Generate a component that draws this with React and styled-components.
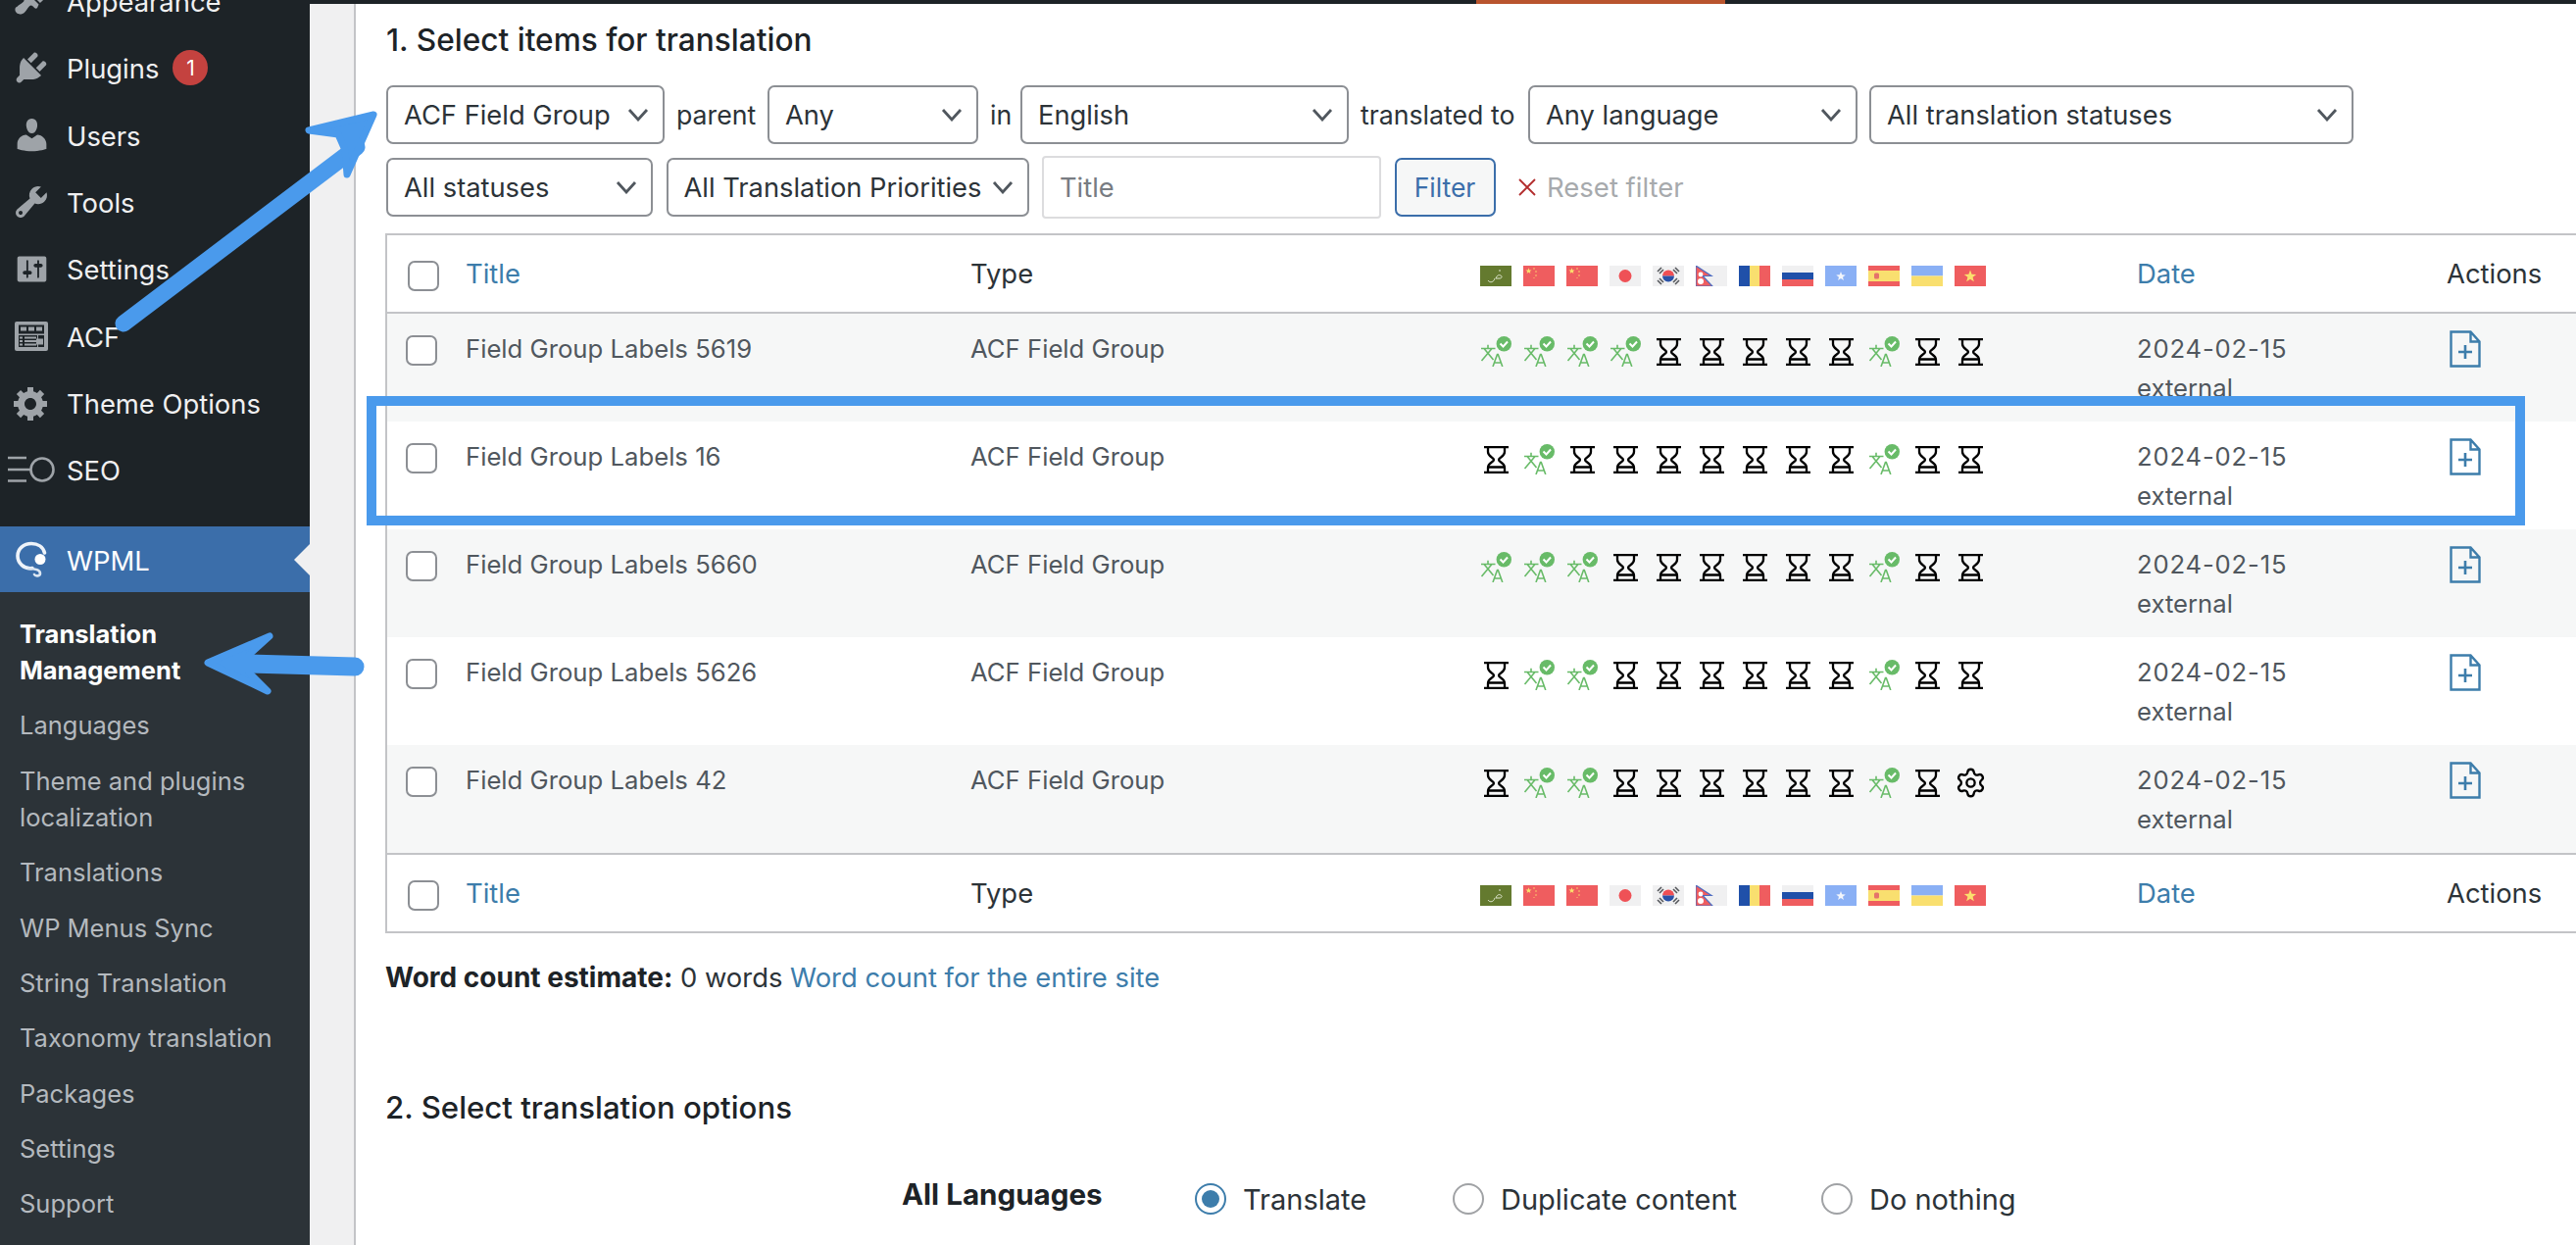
import React from "react";
import styled, { createGlobalStyle } from "styled-components";
import { Settings as GearIcon } from "lucide-react";

const GlobalStyle = createGlobalStyle`
  html, body {
    margin: 0;
    padding: 0;
    background: #fff;
  }
  body {
    font-family: Inter, "Noto Sans", "Liberation Sans", sans-serif;
    font-size: 26px;
    color: #2c3338;
    overflow: hidden;
  }
  * {
    box-sizing: border-box;
  }
`;

const Shell = styled.div`
  position: relative;
  display: flex;
  width: 2628px;
  height: 1270px;
  overflow: hidden;
`;

const Sidebar = styled.nav`
  flex: 0 0 316px;
  display: flex;
  flex-direction: column;
  background: #1d2327;
`;

const TopMenu = styled.div`
  margin-top: -33px;
  margin-bottom: 24px;
`;

const MenuItem = styled.div`
  display: flex;
  align-items: center;
  height: ${(p) => (p.$active ? "67px" : "68.3px")};
  padding-top: 2px;
  font-size: 27.4px;
  color: ${(p) => (p.$active ? "#fff" : "#f0f0f1")};
  background: ${(p) => (p.$active ? "#3b6eaa" : "transparent")};
  position: relative;
`;

const MenuIcon = styled.span`
  flex: 0 0 68px;
  display: flex;
  justify-content: center;
  padding-right: 4px;
  margin-top: -2px;
  svg {
    display: block;
  }
`;

const Badge = styled.span`
  width: 36px;
  height: 36px;
  margin-left: 14px;
  margin-top: -2px;
  border-radius: 50%;
  background: #c4423f;
  color: #fff;
  font-size: 21px;
  display: flex;
  align-items: center;
  justify-content: center;
`;

const ActiveNotch = styled.span`
  position: absolute;
  right: 0;
  top: 50%;
  margin-top: -16px;
  border-style: solid;
  border-width: 16px 16px 16px 0;
  border-color: transparent #f0f0f1 transparent transparent;
`;

const SubMenu = styled.div`
  flex: 1;
  background: #2c3338;
  padding: 14px 0 0 20px;
`;

const SubItem = styled.div`
  padding: 9.7px 0;
  font-size: 25.5px;
  line-height: 37px;
  color: ${(p) => (p.$current ? "#fff" : "#b4b9be")};
  font-weight: ${(p) => (p.$current ? 700 : 400)};
`;

const Gutter = styled.main`
  flex: 1;
  display: flex;
  flex-direction: column;
  min-width: 0;
  background: #f0f0f1;
`;

const TopStrip = styled.div`
  flex: 0 0 4px;
  background: #1d2327;
  padding-left: 1190px;
`;

const StripTab = styled.div`
  width: 254px;
  height: 4px;
  background: #b9552e;
`;

const Panel = styled.div`
  flex: 1;
  margin-left: 45px;
  border-left: 2px solid #c3c4c7;
  background: #fff;
  padding-left: 31px;
`;

const Heading = styled.h3`
  margin: ${(p) => (p.$shift ? "0 0 0 -1px" : "0")};
  font-size: ${(p) => (p.$shift ? "31.2px" : "31.6px")};
  font-weight: 500;
  line-height: 40px;
  color: #1d2327;
  padding-top: ${(p) => p.$top}px;
`;

const FilterRow = styled.div`
  display: flex;
  align-items: center;
  gap: ${(p) => p.$gap}px;
  height: 60px;
  margin-top: ${(p) => p.$top}px;
`;

const FilterWord = styled.span`
  flex: 0 0 ${(p) => p.$width}px;
  min-width: 0;
  font-size: 26.7px;
  color: #2c3338;
  white-space: nowrap;
`;

const Select = styled.div`
  flex: 0 0 ${(p) => p.$width}px;
  height: 60px;
  display: flex;
  align-items: center;
  justify-content: space-between;
  padding: 0 14px 0 16px;
  border: 2px solid #8c8f94;
  border-radius: 7px;
  background: #fff;
  font-size: 27.3px;
  color: #2c3338;
  white-space: nowrap;
  svg {
    flex: none;
  }
`;

const TitleInput = styled.div`
  flex: 0 0 346px;
  height: 64px;
  display: flex;
  align-items: center;
  padding-left: 16px;
  border: 2px solid #dcdcde;
  border-radius: 4px;
  font-size: 27.3px;
  color: #787c82;
`;

const FilterButton = styled.div`
  flex: 0 0 103px;
  height: 60px;
  display: flex;
  align-items: center;
  justify-content: center;
  background: #f6f7f7;
  border: 2px solid #3b6eaa;
  border-radius: 7px;
  color: #3b6eaa;
  font-size: 26.5px;
`;

const ResetLink = styled.span`
  display: flex;
  align-items: center;
  gap: 11px;
  margin-left: 10px;
  font-size: 27.5px;
  color: #a7aaad;
`;

const Table = styled.table`
  width: 2300px;
  margin: 17px 0 0 -1px;
  table-layout: fixed;
  border-collapse: separate;
  border-spacing: 0;
  border: 2px solid #c3c4c7;
  font-size: 25.7px;
  th {
    height: 80px;
    padding: 0;
    text-align: left;
    font-size: 27.4px;
    font-weight: 400;
    vertical-align: middle;
    color: #2c3338;
    background: #fff;
  }
  thead th {
    border-bottom: 2px solid #c3c4c7;
  }
  tfoot th {
    border-top: 2px solid #c3c4c7;
  }
  td {
    height: 110px;
    padding: 16px 0 0;
    vertical-align: top;
    line-height: 40px;
    color: #50575e;
  }
  tbody tr:nth-child(odd) td {
    background: #f6f7f7;
  }
`;

const SortLink = styled.a`
  color: #3d7dab;
  text-decoration: none;
`;

const Checkbox = styled.span`
  display: block;
  width: 32px;
  height: 31px;
  margin-left: ${(p) => (p.$head ? 21 : 19)}px;
  margin-top: ${(p) => (p.$head ? 4 : 6)}px;
  background: #fff;
  border: 2px solid #8c8f94;
  border-radius: 7px;
`;

const FlagRow = styled.div`
  display: flex;
  gap: 12px;
  margin-top: 5px;
  svg {
    display: block;
  }
`;

const StatusRow = styled.div`
  display: flex;
  gap: 12px;
  margin-top: 7px;
`;

const StatusSlot = styled.span`
  flex: 0 0 32px;
  height: 31px;
  display: flex;
  align-items: center;
  justify-content: center;
  color: #000;
`;

const DateLine = styled.div`
  white-space: nowrap;
  letter-spacing: ${(p) => (p.$digits ? "0.8px" : "0")};
`;

const ActionCell = styled.div`
  padding-left: 3px;
  svg {
    display: block;
    margin-top: 1px;
  }
`;

const WordCount = styled.p`
  margin: 25px 0 0 -1px;
  line-height: 40px;
  font-size: 27.4px;
  color: #2c3338;
  strong {
    font-size: 28px;
    font-weight: 700;
    color: #1d2327;
  }
  a {
    color: #3d7dab;
    text-decoration: none;
  }
`;

const OptionsRow = styled.div`
  display: flex;
  align-items: center;
  margin: 55px 0 0 526px;
`;

const OptionsLabel = styled.strong`
  flex: 0 0 299px;
  font-weight: 700;
  font-size: 29.6px;
  color: #1d2327;
  position: relative;
  top: -5px;
`;

const RadioOption = styled.label`
  flex: 0 0 ${(p) => p.$width}px;
  display: flex;
  align-items: center;
  gap: 17px;
  font-size: 29px;
  color: #2c3338;
  white-space: nowrap;
`;

const Radio = styled.span`
  width: 32px;
  height: 32px;
  border-radius: 50%;
  border: 2px solid ${(p) => (p.$on ? "#3d7dab" : "#a0a2a5")};
  display: flex;
  align-items: center;
  justify-content: center;
  &::after {
    content: "";
    display: ${(p) => (p.$on ? "block" : "none")};
    width: 18px;
    height: 18px;
    border-radius: 50%;
    background: #3d7dab;
  }
`;

const HighlightBox = styled.div`
  position: absolute;
  left: 374px;
  top: 404px;
  width: 2202px;
  height: 132px;
  border: 10px solid #4a9aec;
  pointer-events: none;
`;

const ArrowLayer = styled.svg`
  position: absolute;
  inset: 0;
  pointer-events: none;
`;

const ICONS = {
  appearance:
    "M14.48 11.06L7.41 3.99l1.5-1.5c.5-.56 2.3-.47 3.51.32 1.21.8 1.43 1.28 2.91 2.1 1.18.64 2.45 1.26 4.45.85zm-.71.71L6.7 4.7 4.93 6.47c-.39.39-.39 1.02 0 1.41l1.06 1.06c.39.39.39 1.03 0 1.42-.6.6-1.43 1.11-2.21 1.69-.35.26-.7.53-1.01.84C1.43 13.23 1.4 15 2.44 16.04c1.04 1.04 2.81 1.01 4.15-.33.31-.31.58-.66.85-1.01.58-.78 1.09-1.61 1.69-2.21.39-.39 1.02-.39 1.41 0l1.06 1.06c.39.39 1.02.39 1.41 0z",
  plugins:
    "M13.11 4.36L9.87 7.6 8 5.73l3.24-3.24c.35-.34 1.05-.2 1.56.32.52.51.66 1.21.31 1.55zm-8 1.77l.91-1.12 9.01 9.01-1.19.84c-.71.71-2.63 1.16-3.82 1.16H6.14L4.9 17.26c-.59.59-1.54.59-2.12 0-.59-.58-.59-1.53 0-2.12l1.24-1.24v-3.88c0-1.13.4-3.19 1.09-3.89zm7.26 3.97l3.24-3.24c.34-.35 1.04-.21 1.55.31.52.51.66 1.21.31 1.55l-3.24 3.25z",
  users:
    "M10 9.25c-2.27 0-2.73-3.44-2.73-3.44C7 4.02 7.82 2 9.97 2c2.16 0 2.98 2.02 2.71 3.81 0 0-.41 3.44-2.68 3.44zm0 2.57L12.72 10c2.39 0 4.52 2.33 4.52 4.53v2.49s-3.65 1.13-7.24 1.13c-3.65 0-7.24-1.13-7.24-1.13v-2.49c0-2.25 1.94-4.48 4.47-4.48z",
  tools:
    "M16.68 9.77c-1.34 1.34-3.3 1.67-4.95.99l-5.41 6.52c-.99.99-2.59.99-3.58 0s-.99-2.59 0-3.57l6.52-5.42c-.68-1.65-.35-3.61.99-4.95 1.28-1.28 3.12-1.62 4.72-1.06l-2.89 2.89 2.82 2.82 2.86-2.87c.53 1.58.18 3.39-1.08 4.65zM3.81 16.21c.4.39 1.04.39 1.43 0 .4-.4.4-1.04 0-1.43-.39-.4-1.03-.4-1.43 0-.39.39-.39 1.03 0 1.43z",
  settings:
    "M18 16V4c0-.55-.45-1-1-1H3c-.55 0-1 .45-1 1v12c0 .55.45 1 1 1h14c.55 0 1-.45 1-1zM8 11h1c.55 0 1 .45 1 1s-.45 1-1 1H8v1.5c0 .28-.22.5-.5.5s-.5-.22-.5-.5V13H6c-.55 0-1-.45-1-1s.45-1 1-1h1V5.5c0-.28.22-.5.5-.5s.5.22.5.5V11zm5-2h-1c-.55 0-1-.45-1-1s.45-1 1-1h1V5.5c0-.28.22-.5.5-.5s.5.22.5.5V7h1c.55 0 1 .45 1 1s-.45 1-1 1h-1v5.5c0 .28-.22.5-.5.5s-.5-.22-.5-.5V9z",
  gear:
    "M18 12h-2.18c-.17.7-.44 1.35-.81 1.93l1.54 1.54-2.1 2.1-1.54-1.54c-.58.36-1.23.63-1.91.79V19H8v-2.18c-.68-.16-1.33-.43-1.91-.79l-1.54 1.54-2.12-2.12 1.54-1.54c-.36-.58-.63-1.23-.79-1.91H1V9.03h2.17c.16-.7.44-1.35.8-1.94L2.43 5.55l2.1-2.1 1.54 1.54c.58-.37 1.24-.64 1.93-.81V2h3v2.18c.68.16 1.33.43 1.91.79l1.54-1.54 2.12 2.12-1.54 1.54c.36.59.64 1.24.8 1.94H18V12zm-8.5 1.5c1.66 0 3-1.34 3-3s-1.34-3-3-3-3 1.34-3 3 1.34 3 3 3z",
};

const DashIcon = ({ name, size = 40 }) => (
  <svg width={size} height={size} viewBox="0 0 20 20" fill="#9ea3a8">
    <path d={ICONS[name]} />
  </svg>
);

const AcfIcon = () => (
  <svg width="34" height="30" viewBox="0 0 34 30">
    <rect width="34" height="30" rx="2" fill="#9ea3a8" />
    <rect x="4" y="3.5" width="26" height="9" fill="#1d2327" />
    <g fill="#9ea3a8">
      <rect x="6" y="5.5" width="6" height="4" />
      <rect x="14" y="5.5" width="6" height="4" />
      <rect x="22" y="5.5" width="6" height="4" />
    </g>
    <rect x="4" y="14" width="19" height="12" fill="#1d2327" />
    <rect x="24" y="14" width="6" height="12" fill="#1d2327" />
    <g fill="#9ea3a8">
      <rect x="5" y="15.5" width="3" height="2" />
      <rect x="10" y="15.5" width="12" height="2" />
      <rect x="5" y="19" width="3" height="2" />
      <rect x="10" y="19" width="12" height="2" />
      <rect x="5" y="22.5" width="3" height="2" />
      <rect x="10" y="22.5" width="12" height="2" />
      <rect x="22" y="17.5" width="7" height="6" />
    </g>
  </svg>
);

const SeoIcon = () => (
  <svg width="50" height="28" viewBox="0 0 50 28">
    <g stroke="#9ea3a8" strokeWidth="2.6" fill="none">
      <path d="M1 2h19M1 14h23M1 25.5h19" />
      <circle cx="36" cy="14" r="11.5" />
    </g>
  </svg>
);

const WpmlIcon = () => (
  <svg width="32" height="38" viewBox="0 0 32 38" fill="none">
    <path
      d="M17 27.500C8 29 2 22 2 15 2 8 8 2.500 16 2.500c6.500 0 12 3.500 13.500 9.500"
      stroke="#eef3f9"
      strokeWidth="3.6"
      strokeLinecap="round"
    />
    <circle cx="25" cy="18.500" r="5.500" fill="#fff" />
    <path
      d="M13 28c5 0 12 1 12 5 0 3-5 3-6 1"
      stroke="#dbe6f2"
      strokeWidth="2.6"
      strokeLinecap="round"
    />
  </svg>
);

const Chevron = () => (
  <svg width="22" height="14" viewBox="0 0 22 14" fill="none">
    <path d="M2 2l9 10 9-10" stroke="#50575e" strokeWidth="2.8" />
  </svg>
);

const CrossIcon = () => (
  <svg width="18" height="18" viewBox="0 0 18 18">
    <path d="M1 1l16 16M17 1L1 17" stroke="#b32d2e" strokeWidth="1.8" />
  </svg>
);

const Star = ({ cx, cy, r, fill }) => {
  const pts = [];
  for (let i = 0; i < 10; i++) {
    const rad = i % 2 ? r * 0.42 : r;
    const a = -Math.PI / 2 + (i * Math.PI) / 5;
    pts.push(`${cx + rad * Math.cos(a)},${cy + rad * Math.sin(a)}`);
  }
  return <polygon points={pts.join(" ")} fill={fill} />;
};

const FLAG_RED = "#ef5d5f";
const FLAG_PALE = "#f0f0f1";

const FLAGS = [
  <>
    <rect width="32" height="21" fill="#647a2f" />
    <path
      d="M8 15c2 3 6 2 7-2M16 13c1-3 3-4 5-3 2 1 1 3-1 3h-4M19 5h2"
      stroke="#dfe6cf"
      strokeWidth="1"
      fill="none"
    />
  </>,
  <>
    <rect width="32" height="21" fill={FLAG_RED} />
    <Star cx={5.5} cy={5.5} r={3.2} fill="#fbe06e" />
    <path d="M11 2v2M13 5v2M13 9v2M11 12v1" stroke="#f9c86a" strokeWidth="1" />
  </>,
  <>
    <rect width="32" height="21" fill={FLAG_RED} />
    <Star cx={5.5} cy={5.5} r={3.2} fill="#fbe06e" />
    <path d="M11 2v2M13 5v2M13 9v2M11 12v1" stroke="#f9c86a" strokeWidth="1" />
  </>,
  <>
    <rect width="32" height="21" fill={FLAG_PALE} />
    <circle cx="16" cy="10.500" r="6.500" fill="#ef5156" />
  </>,
  <>
    <rect width="32" height="21" fill={FLAG_PALE} />
    <path d="M10 10.500a6 6 0 0 1 12 0z" fill="#ef4f55" />
    <path d="M10 10.500a6 6 0 0 0 12 0z" fill="#2a52a8" />
    <g stroke="#55585c" strokeWidth="1.6">
      <path d="M5 6l4-4M7 8l4-4" />
      <path d="M23 2l4 4M21 4l4 4" />
      <path d="M5 15l4 4M7 13l4 4" />
      <path d="M23 19l4-4M21 17l4-4" />
    </g>
  </>,
  <>
    <rect width="32" height="21" fill={FLAG_PALE} />
    <path d="M0 0l16 10.500H7L17 21H0z" fill="#ef5d5f" stroke="#4f6cc0" strokeWidth="1.2" />
    <circle cx="5" cy="9" r="2.400" fill="#fff" />
    <circle cx="5" cy="16" r="3" fill="#fff" />
  </>,
  <>
    <rect width="11" height="21" fill="#2050a9" />
    <rect x="11" width="10" height="21" fill="#f9df6f" />
    <rect x="21" width="11" height="21" fill={FLAG_RED} />
  </>,
  <>
    <rect width="32" height="7" fill={FLAG_PALE} />
    <rect y="7" width="32" height="7" fill="#2050a9" />
    <rect y="14" width="32" height="7" fill={FLAG_RED} />
  </>,
  <>
    <rect width="32" height="21" fill="#8ab0f5" />
    <Star cx={16} cy={11} r={5} fill="#f2f5fb" />
  </>,
  <>
    <rect width="32" height="21" fill={FLAG_RED} />
    <rect y="5" width="32" height="11" fill="#f9df6f" />
    <rect x="6" y="7.500" width="5" height="6" rx="1.500" fill="#e5736a" />
  </>,
  <>
    <rect width="32" height="10.500" fill="#8ab0f5" />
    <rect y="10.500" width="32" height="10.500" fill="#f9df6f" />
  </>,
  <>
    <rect width="32" height="21" fill={FLAG_RED} />
    <Star cx={16} cy={11} r={6.500} fill="#fbe06e" />
  </>,
];

const Flags = () => (
  <FlagRow>
    {FLAGS.map((flag, i) => (
      <svg key={i} width="32" height="21" viewBox="0 0 32 21">
        {flag}
      </svg>
    ))}
  </FlagRow>
);

const Hourglass = () => (
  <svg width="25" height="28" viewBox="0 0 25 28" fill="none">
    <path
      d="M0 1.200h25M0 26.800h25M4 1.500V6c0 5 6 5.500 6 8s-6 3-6 8v4.500M21 1.500V6c0 5-6 5.500-6 8s6 3 6 8v4.500M4.500 21.500h16"
      stroke="#000"
      strokeWidth="2.300"
    />
  </svg>
);

const TranslatedIcon = () => (
  <svg width="32" height="31" viewBox="0 0 32 31" fill="none">
    <g stroke="#68bb68" strokeWidth="1.600">
      <path d="M1 12.500h14.500M8 8.700v3.800M4 12.500L13.500 24M12 12.500L1.500 25" />
      <path d="M13 31l4.500-12.500h.8L22.800 31M14.500 27h6.800" />
    </g>
    <circle cx="24.300" cy="7.700" r="7.700" fill="#68bb68" />
    <path d="M20.500 7.500l3 3 4.500-5" stroke="#fff" strokeWidth="2" />
  </svg>
);

const DocAddIcon = () => (
  <svg width="32" height="38" viewBox="0 0 32 38" fill="none">
    <path
      d="M1.500 1.500h20l9 10v25h-29zM21.500 1.500v10h9"
      stroke="#3d7dab"
      strokeWidth="2.400"
    />
    <path d="M16 15v14M9 22h14" stroke="#3d7dab" strokeWidth="2.600" />
  </svg>
);

const Arrows = () => (
  <ArrowLayer width="2628" height="1270" viewBox="0 0 2628 1270">
    <path
      d="M126 330L364 150"
      stroke="#4a9aec"
      strokeWidth="17"
      strokeLinecap="round"
    />
    <polygon
      points="381,117 315,133 345,137 352,153 354,178"
      fill="#4a9aec"
      stroke="#4a9aec"
      strokeWidth="7"
      strokeLinejoin="round"
    />
    <path
      d="M362 680L250 677"
      stroke="#4a9aec"
      strokeWidth="19"
      strokeLinecap="round"
    />
    <polygon
      points="212,676 275,649 254,668 254,686 273,705"
      fill="#4a9aec"
      stroke="#4a9aec"
      strokeWidth="7"
      strokeLinejoin="round"
    />
  </ArrowLayer>
);

const ROWS = [
  { title: "Field Group Labels 5619", status: "ttttwwwwwtww" },
  { title: "Field Group Labels 16", status: "wtwwwwwwwtww" },
  { title: "Field Group Labels 5660", status: "tttwwwwwwtww" },
  { title: "Field Group Labels 5626", status: "wttwwwwwwtww" },
  { title: "Field Group Labels 42", status: "wttwwwwwwtwg" },
];

const STATUS_ICONS = {
  t: <TranslatedIcon />,
  w: <Hourglass />,
  g: <GearIcon size={33} strokeWidth={1.7} />,
};

const SUB_ITEMS = [
  "Languages",
  "Theme and plugins localization",
  "Translations",
  "WP Menus Sync",
  "String Translation",
  "Taxonomy translation",
  "Packages",
  "Settings",
  "Support",
];

const HeaderCells = () => (
  <tr>
    <th>
      <Checkbox $head />
    </th>
    <th>
      <SortLink>Title</SortLink>
    </th>
    <th>Type</th>
    <th>
      <Flags />
    </th>
    <th>
      <SortLink>Date</SortLink>
    </th>
    <th>Actions</th>
  </tr>
);

export default function App() {
  return (
    <Shell>
      <GlobalStyle />
      <Sidebar>
        <TopMenu>
          <MenuItem>
            <MenuIcon>
              <DashIcon name="appearance" />
            </MenuIcon>
            Appearance
          </MenuItem>
          <MenuItem>
            <MenuIcon>
              <DashIcon name="plugins" />
            </MenuIcon>
            Plugins
            <Badge>1</Badge>
          </MenuItem>
          <MenuItem>
            <MenuIcon>
              <DashIcon name="users" size={41} />
            </MenuIcon>
            Users
          </MenuItem>
          <MenuItem>
            <MenuIcon>
              <DashIcon name="tools" />
            </MenuIcon>
            Tools
          </MenuItem>
          <MenuItem>
            <MenuIcon>
              <DashIcon name="settings" size={37} />
            </MenuIcon>
            Settings
          </MenuItem>
          <MenuItem>
            <MenuIcon>
              <AcfIcon />
            </MenuIcon>
            ACF
          </MenuItem>
          <MenuItem>
            <MenuIcon>
              <DashIcon name="gear" />
            </MenuIcon>
            Theme Options
          </MenuItem>
          <MenuItem>
            <MenuIcon>
              <SeoIcon />
            </MenuIcon>
            SEO
          </MenuItem>
        </TopMenu>
        <MenuItem $active>
          <MenuIcon>
            <WpmlIcon />
          </MenuIcon>
          WPML
          <ActiveNotch />
        </MenuItem>
        <SubMenu>
          <SubItem $current>Translation Management</SubItem>
          {SUB_ITEMS.map((item) => (
            <SubItem key={item}>{item}</SubItem>
          ))}
        </SubMenu>
      </Sidebar>
      <Gutter>
        <TopStrip>
          <StripTab />
        </TopStrip>
        <Panel>
          <Heading $top={17}>1. Select items for translation</Heading>
          <FilterRow $top={26} $gap={12}>
            <Select $width={284}>
              ACF Field Group
              <Chevron />
            </Select>
            <FilterWord $width={81}>parent</FilterWord>
            <Select $width={215}>
              Any
              <Chevron />
            </Select>
            <FilterWord $width={19}>in</FilterWord>
            <Select $width={335}>
              English
              <Chevron />
            </Select>
            <FilterWord $width={159}>translated to</FilterWord>
            <Select $width={336}>
              Any language
              <Chevron />
            </Select>
            <Select $width={494}>
              All translation statuses
              <Chevron />
            </Select>
          </FilterRow>
          <FilterRow $top={14} $gap={13.5}>
            <Select $width={272}>
              All statuses
              <Chevron />
            </Select>
            <Select $width={370}>
              All Translation Priorities
              <Chevron />
            </Select>
            <TitleInput>Title</TitleInput>
            <FilterButton>Filter</FilterButton>
            <ResetLink>
              <CrossIcon />
              Reset filter
            </ResetLink>
          </FilterRow>
          <Table>
            <colgroup>
              <col width="80" />
              <col width="515" />
              <col width="520" />
              <col width="670" />
              <col width="316" />
              <col />
            </colgroup>
            <thead>
              <HeaderCells />
            </thead>
            <tbody>
              {ROWS.map((row) => (
                <tr key={row.title}>
                  <td>
                    <Checkbox />
                  </td>
                  <td>{row.title}</td>
                  <td>ACF Field Group</td>
                  <td>
                    <StatusRow>
                      {row.status.split("").map((s, i) => (
                        <StatusSlot key={i}>{STATUS_ICONS[s]}</StatusSlot>
                      ))}
                    </StatusRow>
                  </td>
                  <td>
                    <DateLine $digits>2024-02-15</DateLine>
                    <DateLine>external</DateLine>
                  </td>
                  <td>
                    <ActionCell>
                      <DocAddIcon />
                    </ActionCell>
                  </td>
                </tr>
              ))}
            </tbody>
            <tfoot>
              <HeaderCells />
            </tfoot>
          </Table>
          <WordCount>
            <strong>Word count estimate:</strong> 0 words{" "}
            <a>Word count for the entire site</a>
          </WordCount>
          <Heading $top={93} $shift>2. Select translation options</Heading>
          <OptionsRow>
            <OptionsLabel>All Languages</OptionsLabel>
            <RadioOption $width={263}>
              <Radio $on />
              Translate
            </RadioOption>
            <RadioOption $width={376}>
              <Radio />
              Duplicate content
            </RadioOption>
            <RadioOption $width={300}>
              <Radio />
              Do nothing
            </RadioOption>
          </OptionsRow>
        </Panel>
      </Gutter>
      <HighlightBox />
      <Arrows />
    </Shell>
  );
}
